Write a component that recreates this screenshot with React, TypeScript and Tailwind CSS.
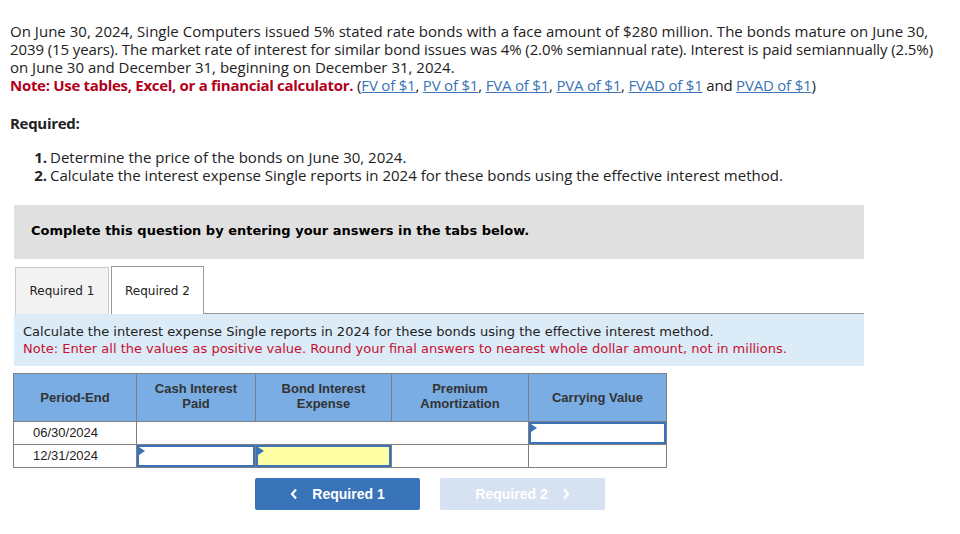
import React from 'react';

const links = ['FV of $1', 'PV of $1', 'FVA of $1', 'PVA of $1', 'FVAD of $1'];

const Marker: React.FC = () => (
  <span className="pointer-events-none absolute left-0 top-0 h-0 w-0 border-y-[4px] border-l-[6px] border-y-transparent border-l-[#3a73b7]" />
);

const InputCell: React.FC<{ yellow?: boolean }> = ({ yellow }) => (
  <td className="border border-[#808080] p-0">
    <div className={`relative h-[22px] border-2 border-[#3a73b7] ${yellow ? 'bg-[#ffffa6]' : 'bg-white'}`}>
      <Marker />
    </div>
  </td>
);

const App: React.FC = () => {
  return (
    <div className="min-h-screen bg-white text-[#222]">
      <div className="w-[960px] px-[10px] pt-[22px] font-['Open_Sans',sans-serif] text-[15px] leading-[18px]">
        <p className="whitespace-nowrap">
          <span className="tracking-[0.03px]">
            On June 30, 2024, Single Computers issued 5% stated rate bonds with a face amount of $280 million. The bonds mature on June 30,
          </span>
          <br />
          <span className="tracking-[-0.1px]">
            2039 (15 years). The market rate of interest for similar bond issues was 4% (2.0% semiannual rate). Interest is paid semiannually (2.5%)
          </span>
          <br />
          on June 30 and December 31, beginning on December 31, 2024.
          <br />
          <span className="font-bold tracking-[-0.3px] text-[#b2001b]">Note: Use tables, Excel, or a financial calculator.</span>{' '}
          <span className="tracking-[-0.2px]">
            <span>(</span>
            {links.map((l, i) => (
              <React.Fragment key={l}>
                <a className="text-[#3a73b7] underline">{l}</a>
                {i < links.length - 1 ? ', ' : ' and '}
              </React.Fragment>
            ))}
            <a className="text-[#3a73b7] underline">PVAD of $1</a>)
          </span>
        </p>

        <p className="mt-[20px] font-bold tracking-[-0.3px]">Required:</p>

        <ol className="mt-[16px] pl-[20px]">
          <li className="flex gap-[3px]">
            <span className="w-[17px] text-right font-bold">1.</span>
            <span>Determine the price of the bonds on June 30, 2024.</span>
          </li>
          <li className="flex gap-[3px]">
            <span className="w-[17px] text-right font-bold">2.</span>
            <span>Calculate the interest expense Single reports in 2024 for these bonds using the effective interest method.</span>
          </li>
        </ol>
      </div>

      <div className="ml-[14px] mt-[21px] w-[850px] font-['DejaVu_Sans','Verdana',sans-serif]">
        <div className="flex h-[54px] items-center bg-[#e0e0e0] px-[17px] pb-[2px] text-[13px] font-bold text-black">
          Complete this question by entering your answers in the tabs below.
        </div>

        <div className="mt-[7px] flex items-end text-[12px] text-[#222]">
          <div className="ml-[1px] flex h-[47px] w-[94px] items-center justify-center border border-b-0 border-[#c8c8c8] bg-[#f2f2f2]">
            Required 1
          </div>
          <div className="ml-[2px] flex h-[48px] w-[93px] items-center justify-center border-x border-t border-[#999] bg-white">
            Required 2
          </div>
          <div className="flex-1 border-b border-[#999]" />
        </div>

        <div className="bg-[#dbebf8] px-[9px] pb-[9px] pt-[9px] text-[13px] leading-[17px]">
          <p className="text-[#222]">Calculate the interest expense Single reports in 2024 for these bonds using the effective interest method.</p>
          <p className="text-[#c8102e]">Note: Enter all the values as positive value. Round your final answers to nearest whole dollar amount, not in millions.</p>
        </div>
      </div>

      <table className="ml-[13px] mt-[7px] border-collapse font-['Liberation_Sans',Arial,sans-serif] text-[13px]">
        <thead>
          <tr className="h-[48px] bg-[#79ade4] font-bold leading-[15px] text-[#333]">
            <th className="w-[123px] border border-[#808080]">Period-End</th>
            <th className="w-[119px] border border-[#808080] pb-[3px]">
              Cash Interest
              <br />
              Paid
            </th>
            <th className="w-[136px] border border-[#808080] pb-[3px]">
              Bond Interest
              <br />
              Expense
            </th>
            <th className="w-[137px] border border-[#808080] pb-[3px]">
              Premium
              <br />
              Amortization
            </th>
            <th className="w-[138px] border border-[#808080]">Carrying Value</th>
          </tr>
        </thead>
        <tbody className="text-[#222]">
          <tr className="h-[23px]">
            <td className="border border-[#808080] pl-[19px]">06/30/2024</td>
            <td colSpan={3} className="border border-[#808080]" />
            <InputCell />
          </tr>
          <tr className="h-[23px]">
            <td className="border border-[#808080] pl-[19px]">12/31/2024</td>
            <InputCell />
            <InputCell yellow />
            <td className="border border-[#808080]" />
            <td className="border border-[#808080]" />
          </tr>
        </tbody>
      </table>

      <div className="ml-[255px] mt-[10px] flex gap-[20px] font-['Liberation_Sans',Arial,sans-serif] text-[14px] font-bold text-white">
        <button className="flex h-[32px] w-[165px] items-center justify-center gap-[14px] rounded-[2px] bg-[#3873b8]">
          <svg width="8" height="12" viewBox="0 0 8 12" fill="none" stroke="white" strokeWidth="2.2">
            <path d="M6 1.5 L2 6 L6 10.5" />
          </svg>
          <span>Required 1</span>
        </button>
        <button className="flex h-[32px] w-[165px] items-center justify-center gap-[14px] rounded-[2px] bg-[#d6e2f1]">
          <span>Required 2</span>
          <svg width="8" height="12" viewBox="0 0 8 12" fill="none" stroke="white" strokeWidth="2.2">
            <path d="M2 1.5 L6 6 L2 10.5" />
          </svg>
        </button>
      </div>
    </div>
  );
};

export default App;
